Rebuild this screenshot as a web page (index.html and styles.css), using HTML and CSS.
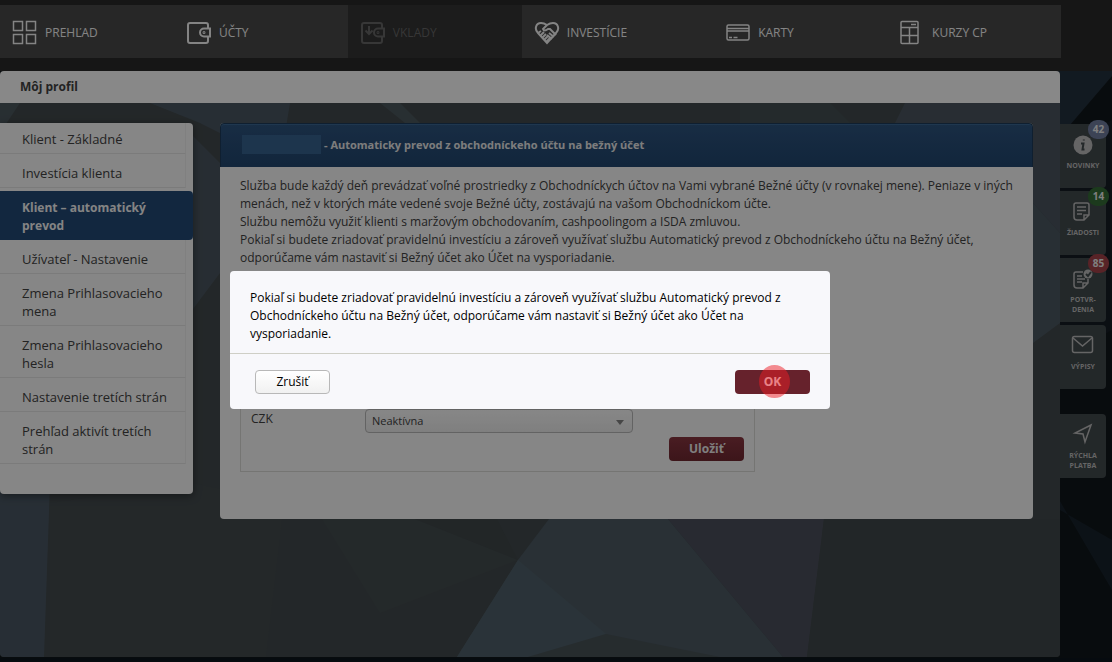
FILE: index.html
```html
<!DOCTYPE html>
<html lang="sk">
<head>
  <meta charset="UTF-8">
  <meta name="viewport" content="width=device-width, initial-scale=1.0">
  <title>Môj profil</title>
  <link rel="stylesheet" href="styles.css">
</head>
<body>
  <svg class="backdrop" viewBox="0 0 1112 662" preserveAspectRatio="none" aria-hidden="true">
    <rect width="1112" height="662" fill="#10171b"/>
    <path d="M1040 60H1112V76L1040 160Z" fill="#22303c"/>
    <path d="M1040 370L1112 330V120L1040 160Z" fill="#151d24"/>
    <path d="M1030 450L1112 590V540L1060 510Z" fill="#17222b"/>
    <path d="M0 662H1112V658H0Z" fill="#0c141c"/>
  </svg>

  <header class="top">
    <nav class="mainNav">
      <a href="#">
        <svg width="26" height="26" viewBox="0 0 26 26"><path d="M1.500 1.500h9v9h-9zM14.500 1.500h9v9h-9zM1.500 14.500h9v9h-9zM14.500 14.500h9v9h-9z"/></svg>
        PREHĽAD
      </a>
      <a href="#">
        <svg class="thick" width="26" height="26" viewBox="0 0 26 26"><path d="M22 8V5q0-2-2-2H4Q2 3 2 5v16q0 2 2 2h16q2 0 2-2v-4"/><path d="M24 8.500h-6a4 4 0 0 0 0 8h6z"/><circle cx="18" cy="12.500" r=".5"/></svg>
        ÚČTY
      </a>
      <a href="#" class="disabled">
        <svg class="thick" width="26" height="26" viewBox="0 0 26 26"><path d="M22 8V5q0-2-2-2H4Q2 3 2 5v16q0 2 2 2h16q2 0 2-2v-4"/><path d="M24 8.500h-6a4 4 0 0 0 0 8h6z"/><circle cx="18" cy="12.500" r=".5"/><path d="M9 6v8M5.500 10.500L9 14l3.500-3.500"/></svg>
        VKLADY
      </a>
      <a href="#">
        <svg class="thick" width="26" height="26" viewBox="0 0 26 26"><path d="M4 13C0 9 2 3 7 3q3 0 6 2 3-2 6-2c5 0 7 6 3 10l-9 10z"/><path d="M13 5L9 9q1 3 5 0h2l6 6M4 13l3-2M6 16l4-4M8 18l4-4M10 20l4-4M12 22l4-4M15 13l5 4M13 15l5 4"/></svg>
        INVESTÍCIE
      </a>
      <a href="#">
        <svg width="26" height="26" viewBox="0 0 26 26"><rect x="2" y="5" width="22" height="15" rx="1.500"/><path d="M2 8.500h22M2 11h22M4 17.500h3M8.500 17.500h4"/></svg>
        KARTY
      </a>
      <a href="#">
        <svg width="26" height="26" viewBox="0 0 26 26"><rect x="2" y="1.500" width="17" height="22" rx="1"/><path d="M2 7.500h17M2 15.500h17M10.500 7.500v16M12 4.500h5"/></svg>
        KURZY CP
      </a>
    </nav>
  </header>

  <div class="page">
    <main class="content">
      <h1>Môj profil</h1>
      <div class="stage">
        <svg class="facets" viewBox="0 0 1060 554" preserveAspectRatio="none" aria-hidden="true">
          <rect width="1060" height="554" fill="#41484b"/>
          <path d="M0 0H20L0 30Z" fill="#4a565c"/>
          <path d="M150 0H290L280 60L200 20Z" fill="#485560"/>
          <path d="M190 30L220 60V170L190 210Z" fill="#48535d"/>
          <path d="M380 0H400L420 20H405Z" fill="#4a565c"/>
          <path d="M740 0H830L850 20H740Z" fill="#434e51"/>
          <path d="M905 0H1060V130L1033 100V20H895Z" fill="#49535d"/>
          <path d="M1033 100L1060 130V220L1033 240Z" fill="#4a5660"/>
          <path d="M0 380H50L44 554H0Z" fill="#485561"/>
          <path d="M193 380L284 400L266 554H50V400Z" fill="#42494c"/>
          <path d="M322 416H415L518 457L380 510Z" fill="#434b4e"/>
          <path d="M415 416H497L518 457Z" fill="#3e4548"/>
          <path d="M549 416H668L783 554H457L518 457Z" fill="#4b5862"/>
          <path d="M518 457L457 554H528L606 531Z" fill="#4e5e68"/>
          <path d="M606 531L720 554H528Z" fill="#465054"/>
          <path d="M668 416H824L807 554H783Z" fill="#494e5a"/>
          <path d="M824 416H1060V554H807Z" fill="#3f4649"/>
        </svg>

        <ul class="sideMenu">
          <li><a href="#">Klient - Základné</a></li>
          <li><a href="#">Investícia klienta</a></li>
          <li class="active"><a href="#">Klient – automatický prevod</a></li>
          <li><a href="#">Užívateľ - Nastavenie</a></li>
          <li><a href="#">Zmena Prihlasovacieho mena</a></li>
          <li><a href="#">Zmena Prihlasovacieho hesla</a></li>
          <li><a href="#">Nastavenie tretích strán</a></li>
          <li><a href="#">Prehľad aktivít tretích strán</a></li>
        </ul>

        <section class="panel">
          <h2><span class="account"></span>- Automaticky prevod z obchodníckeho účtu na bežný účet</h2>
          <div class="panelBody">
            <p>
              Služba bude každý deň prevádzať voľné prostriedky z Obchodníckych účtov na Vami vybrané Bežné účty (v rovnakej mene). Peniaze v iných menách, než v ktorých máte vedené svoje Bežné účty, zostávajú na vašom Obchodníckom účte.<br>
              Službu nemôžu využiť klienti s maržovým obchodovaním, cashpoolingom a ISDA zmluvou.<br>
              Pokiaľ si budete zriadovať pravidelnú investíciu a zároveň využívať službu Automatický prevod z Obchodníckeho účtu na Bežný účet, odporúčame vám nastaviť si Bežný účet ako Účet na vysporiadanie.
            </p>
            <form class="settings">
              <div class="row">
                <label for="czk">CZK</label>
                <div class="selectBox">
                  <select id="czk">
                    <option>Neaktívna</option>
                  </select>
                </div>
              </div>
              <button type="button" class="btn primary">Uložiť</button>
            </form>
          </div>
        </section>
      </div>
    </main>

    <aside class="tabs">
      <a href="#">
        <svg width="24" height="24" viewBox="0 0 24 24"><circle cx="12" cy="12" r="9.500" class="fill"/><path class="hole" d="M10 10.500h2.500L11.500 16.500h2M12.800 6.500v1"/></svg>
        NOVINKY<span class="badge blue">42</span>
      </a>
      <a href="#">
        <svg width="24" height="24" viewBox="0 0 24 24"><path d="M5 3h11q2 0 2 2v10l-5 5H6q-3 0-3-3V5q0-2 2-2zM18 15h-5v5M6 7h9M6 10.500h9M6 14h5"/></svg>
        ŽIADOSTI<span class="badge green">14</span>
      </a>
      <a href="#">
        <svg width="24" height="24" viewBox="0 0 24 24"><path d="M12 5H5Q3 5 3 7v11q0 3 3 3h6l5-5v-4M17 16h-5v5M6 9h5M6 12h8M6 15h5"/><circle cx="17" cy="7" r="4.500" class="fill"/><path class="hole" d="M15 7l2 2 3-4"/></svg>
        POTVR-<br>DENIA<span class="badge red">85</span>
      </a>
      <a href="#">
        <svg width="24" height="24" viewBox="0 0 24 24"><rect x="1.500" y="2.500" width="20" height="16" rx="2"/><path d="M2 4l9.500 8L21 4"/></svg>
        VÝPISY
      </a>
      <a href="#" class="quick">
        <svg width="24" height="24" viewBox="0 0 24 24"><path d="M20 2L4 10l8 1 2 8z"/></svg>
        RÝCHLA<br>PLATBA
      </a>
    </aside>
  </div>

  <div class="overlay">
    <div class="modal" role="dialog" aria-modal="true">
      <p>Pokiaľ si budete zriadovať pravidelnú investíciu a zároveň využívať službu Automatický prevod z Obchodníckeho účtu na Bežný účet, odporúčame vám nastaviť si Bežný účet ako Účet na vysporiadanie.</p>
      <div class="modalButtons">
        <button type="button" class="btn">Zrušiť</button>
        <button type="button" class="btn primary ok">OK</button>
      </div>
    </div>
  </div>
</body>
</html>
```
FILE: styles.css
```css
* {
  box-sizing: border-box;
}

body {
  margin: 0;
  min-height: 100vh;
  background: #101719;
  color: #404040;
  font-family: "Open Sans", "Noto Sans", sans-serif;
  font-size: 12px;
  line-height: 18px;
}

a {
  color: inherit;
  text-decoration: none;
}

svg {
  fill: none;
  stroke: currentColor;
  stroke-width: 1.5;
}

.backdrop {
  position: absolute;
  z-index: -1;
  width: 100%;
  height: 100%;
  stroke: none;
}

/* top navigation */
.top {
  height: 71px;
  padding-top: 5px;
  background: #282828;
}
.mainNav {
  display: grid;
  grid-template-columns: 10fr 10fr 10fr 11fr 10fr 10fr;
  margin-right: 51px;
  background: #474747;
}
.mainNav a {
  display: flex;
  align-items: center;
  gap: 7px;
  height: 53px;
  padding: 2px 0 0 12px;
  color: #f0f0f0;
}
.mainNav a.disabled {
  background: #333;
  color: #646464;
}
.mainNav .thick {
  stroke-width: 2;
}

/* page */
.page {
  display: flex;
}
.content {
  flex: 1;
}
.content h1 {
  margin: 0;
  padding: 7px 20px;
  border-radius: 4px 4px 0 0;
  background: #f7f7f7;
  font-size: 12px;
  line-height: 18px;
}
.stage {
  position: relative;
  display: flex;
  align-items: flex-start;
  gap: 27px;
  min-height: calc(100vh - 108px);
  padding: 20px 27px 20px 0;
}
.facets {
  position: absolute;
  z-index: -1;
  top: 0;
  left: 0;
  width: 100%;
  height: 100%;
  border-radius: 0 0 4px 4px;
  stroke: none;
}

.sideMenu {
  width: 193px;
  margin: 0;
  padding: 0 0 30px;
  border-radius: 0 4px 4px 4px;
  background: #f4f4f4;
  box-shadow: 0 2px 8px rgba(0, 0, 0, 0.4);
  font-size: 13px;
  list-style: none;
}
.sideMenu li {
  margin-right: 7px;
  padding: 10px 14px 5px 22px;
  border-right: 1px solid #eaeaea;
  border-bottom: 1px solid #e0e0e0;
}
.sideMenu li:first-child {
  padding-top: 7px;
}
.sideMenu li.active {
  margin: 3px 0 0;
  padding: 8px 40px 5px 22px;
  border: 0;
  border-radius: 0 4px 4px 0;
  background: #214774;
  color: #f0f0f0;
  font-size: 12px;
  font-weight: bold;
}

.panel {
  flex: 1;
  border-radius: 4px;
  background: #f4f4f4;
}
.panel h2 {
  display: flex;
  align-items: center;
  gap: 3px;
  height: 44px;
  margin: 0;
  padding: 0 21px 2px;
  border: 1px solid #1c3a58;
  border-bottom: 0;
  border-radius: 4px 4px 0 0;
  background: linear-gradient(#2c527c, #21456d);
  box-shadow: inset 0 1px #3a6490;
  color: #e4e4e4;
  font-size: 11px;
}
.account {
  width: 79px;
  height: 19px;
  background: #35618c;
}
.panelBody {
  padding: 10px 20px 47px;
}
.panelBody p {
  margin: 0 0 20px;
}

.settings {
  width: 515px;
  padding: 121px 10px 10px;
  border: 1px solid #d6d6d2;
  text-align: right;
}
.row {
  display: grid;
  grid-template-columns: 114px 268px;
  margin-bottom: 4px;
  text-align: left;
}
.row label {
  padding-top: 1px;
}
.selectBox {
  position: relative;
}
.selectBox::after {
  content: "";
  position: absolute;
  top: 11px;
  right: 9px;
  border: 4px solid transparent;
  border-top: 5px solid #808080;
  border-bottom: 0;
  pointer-events: none;
}
select {
  display: block;
  width: 100%;
  height: 24px;
  padding: 0 6px;
  border: 1px solid #b4b4b4;
  border-radius: 4px;
  appearance: none;
  background: linear-gradient(#f6f6f6, #e8e8e8);
  color: #404040;
  font: inherit;
  font-size: 11px;
}

.btn {
  width: 75px;
  height: 24px;
  padding: 0;
  border: 1px solid #b8b8b8;
  border-radius: 4px;
  background: linear-gradient(#fff, #f1f1f1);
  color: #000;
  font: inherit;
}
.btn.primary {
  border: 0;
  background: linear-gradient(#86353f, #6e2730);
  color: #e8e8e8;
  font-weight: bold;
}

/* right side tabs */
.tabs {
  display: flex;
  flex-direction: column;
  gap: 3px;
  width: 52px;
  padding: 53px 6px 0 0;
}
.tabs a {
  position: relative;
  height: 64px;
  padding-top: 9px;
  border-radius: 0 4px 4px 0;
  background: #41494c;
  color: #b8b8b8;
  font-size: 7px;
  font-weight: bold;
  line-height: 10px;
  text-align: center;
}
.tabs svg {
  display: block;
  margin: 0 auto 4px;
}
.tabs .fill {
  fill: currentColor;
  stroke: none;
}
.tabs .hole {
  stroke: #41494c;
  stroke-width: 2;
}
.tabs .quick {
  margin-top: 22px;
}
.badge {
  position: absolute;
  top: -4px;
  right: -3px;
  width: 21px;
  height: 19px;
  border-radius: 9px;
  color: #e8e8e8;
  font-size: 10px;
  line-height: 19px;
}
.badge.blue {
  background: #6d7a9c;
}
.badge.green {
  background: #336b35;
}
.badge.red {
  background: #a04048;
}

/* dialog */
.overlay {
  position: fixed;
  inset: 0;
  display: flex;
  align-items: center;
  justify-content: center;
  padding: 18px 52px 0 0;
  background: rgba(0, 0, 0, 0.45);
}
.modal {
  width: 600px;
  border-radius: 4px;
  background: #f8f8fb;
  color: #000;
}
.modal p {
  margin: 0;
  padding: 18px 40px 10px 20px;
}
.modalButtons {
  display: flex;
  justify-content: space-between;
  padding: 16px 20px 15px 25px;
  border-top: 1px solid #cfcfc6;
}
.modal .ok {
  position: relative;
  background: #66222c;
}
.modal .ok::after {
  content: "";
  position: absolute;
  top: -5px;
  left: 24px;
  width: 31px;
  height: 33px;
  border-radius: 50%;
  background: rgba(237, 28, 36, 0.5);
}
```
